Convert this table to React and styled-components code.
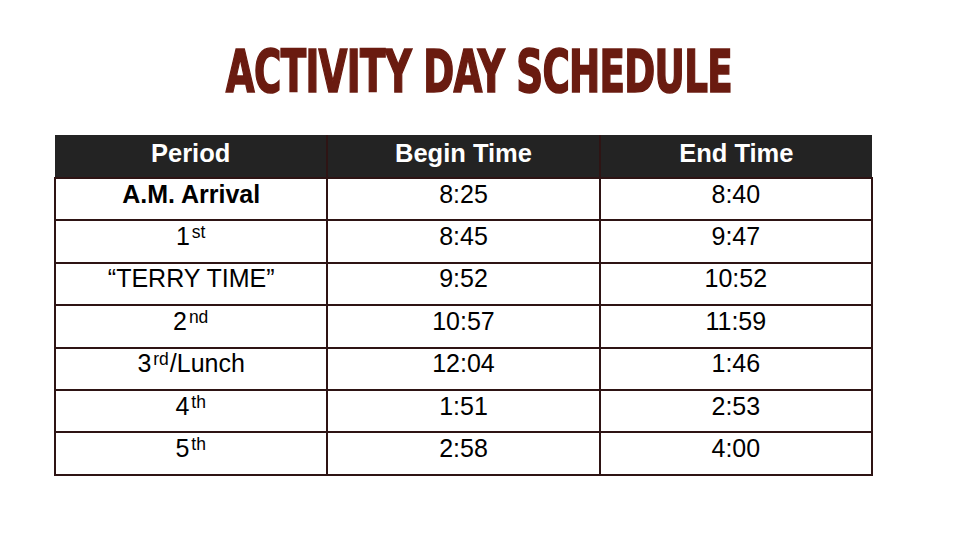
import React from "react";
import styled, { createGlobalStyle } from "styled-components";

const Global = createGlobalStyle`
  html, body { margin: 0; padding: 0; background: #ffffff; }
  body { width: 960px; height: 540px; overflow: hidden; font-family: "Liberation Sans", Arial, sans-serif; }
`;

const Page = styled.div`
  width: 960px;
  height: 540px;
  display: flex;
  flex-direction: column;
  padding: 0 0 0 54px;
  box-sizing: border-box;
`;

const TitleRow = styled.div`
  width: 849px;
  height: 135px;
  display: flex;
  justify-content: center;
  align-items: flex-start;
`;

const Title = styled.h1`
  margin: 39px 0 0 0;
  font-family: "DejaVu Sans Condensed", "Liberation Sans", sans-serif;
  font-weight: 700;
  font-size: 58px;
  line-height: 66px;
  color: #6a1b10;
  letter-spacing: -1px;
  transform: scaleX(0.715);
  -webkit-text-stroke: 1.6px #6a1b10;
  white-space: nowrap;
`;

const Table = styled.table`
  width: 819px;
  border-collapse: collapse;
  table-layout: fixed;
`;

const HeadCell = styled.th`
  height: 43px;
  box-sizing: border-box;
  padding: 0 0 7px 0;
  background: #232323;
  color: #ffffff;
  font-weight: 700;
  font-size: 25.5px;
  line-height: 28px;
  text-align: center;
  vertical-align: middle;
  border-left: 2px solid #2e1414;
  border-bottom: 2px solid #2e1414;
  &:first-child { border-left: none; }
`;

const Cell = styled.td`
  height: 42.4px;
  padding: 0 0 11px 0;
  box-sizing: border-box;
  font-size: 25px;
  line-height: 26px;
  font-weight: ${(p) => (p.$bold ? 700 : 400)};
  color: #000000;
  text-align: center;
  vertical-align: middle;
  border: 2px solid #2e1414;
`;

const Sup = styled.sup`
  font-size: 17.5px;
  vertical-align: 7px;
  line-height: 0;
  margin-left: 2px;
  margin-right: 1px;
`;

const rows = [
  { p: "A.M. Arrival", bold: true, b: "8:25", e: "8:40" },
  { p: "1", sup: "st", b: "8:45", e: "9:47" },
  { p: "\u201CTERRY TIME\u201D", b: "9:52", e: "10:52" },
  { p: "2", sup: "nd", b: "10:57", e: "11:59" },
  { p: "3", sup: "rd", after: "/Lunch", b: "12:04", e: "1:46" },
  { p: "4", sup: "th", b: "1:51", e: "2:53" },
  { p: "5", sup: "th", b: "2:58", e: "4:00" },
];

export default function App() {
  return (
    <>
      <Global />
      <Page>
        <TitleRow>
          <Title>ACTIVITY DAY SCHEDULE</Title>
        </TitleRow>
        <Table>
          <thead>
            <tr>
              <HeadCell>Period</HeadCell>
              <HeadCell>Begin Time</HeadCell>
              <HeadCell>End Time</HeadCell>
            </tr>
          </thead>
          <tbody>
            {rows.map((r, i) => (
              <tr key={i}>
                <Cell $bold={r.bold}>
                  {r.p}
                  {r.sup && <Sup>{r.sup}</Sup>}
                  {r.after}
                </Cell>
                <Cell>{r.b}</Cell>
                <Cell>{r.e}</Cell>
              </tr>
            ))}
          </tbody>
        </Table>
      </Page>
    </>
  );
}
